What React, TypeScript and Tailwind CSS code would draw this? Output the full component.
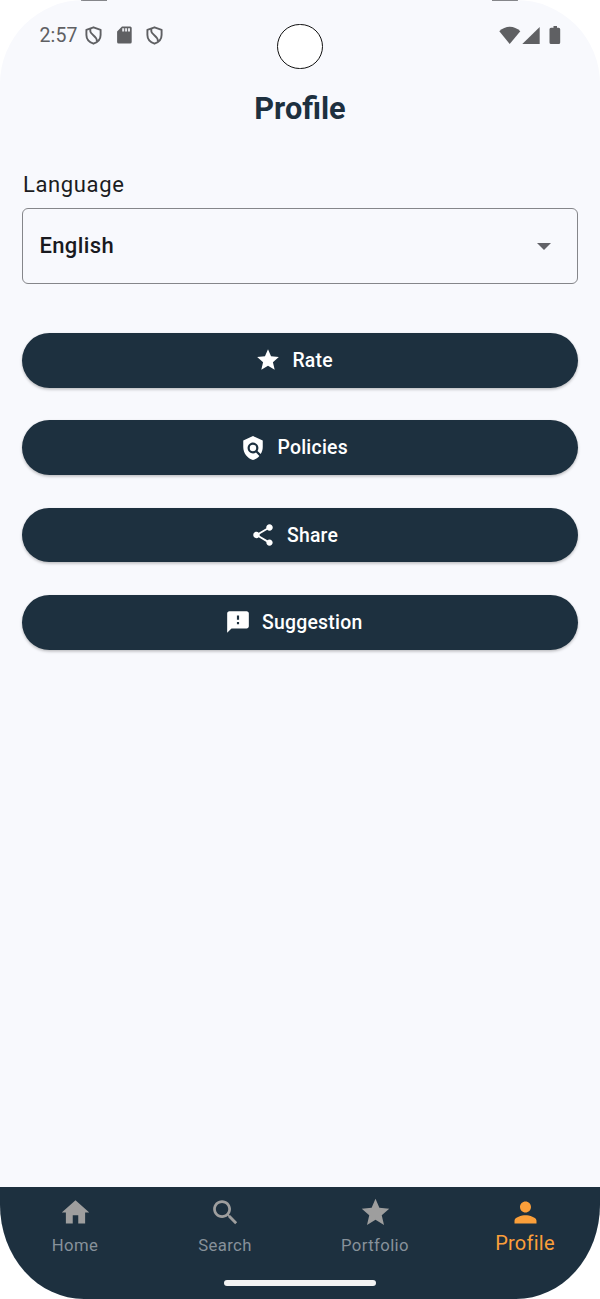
import type { ReactNode } from "react";

const paths = {
  star: "M12 17.27 18.18 21l-1.64-7.03L22 9.24l-7.19-.61L12 2 9.19 8.63 2 9.24l5.46 4.73L5.82 21z",
  policy:
    "M21 5l-9-4-9 4v6c0 5.55 3.84 10.74 9 12 2.3-.56 4.33-1.9 5.88-3.71l-3.12-3.12c-1.94 1.29-4.58 1.07-6.29-.64-1.95-1.95-1.95-5.12 0-7.07 1.95-1.95 5.12-1.95 7.07 0 1.71 1.71 1.92 4.35.64 6.29l2.9 2.9C20.29 15.69 21 13.38 21 11V5z M12 9a3 3 0 1 0 0 6a3 3 0 1 0 0-6z",
  share:
    "M18 16.08c-.76 0-1.44.3-1.96.77L8.91 12.7c.05-.23.09-.46.09-.7s-.04-.47-.09-.7l7.05-4.11c.54.5 1.25.81 2.04.81 1.66 0 3-1.34 3-3s-1.34-3-3-3-3 1.34-3 3c0 .24.04.47.09.7L8.04 9.81C7.5 9.31 6.79 9 6 9c-1.66 0-3 1.34-3 3s1.34 3 3 3c.79 0 1.5-.31 2.04-.81l7.12 4.16c-.05.21-.08.43-.08.65 0 1.61 1.31 2.92 2.92 2.92s2.92-1.31 2.92-2.92-1.31-2.92-2.92-2.92z",
  feedback:
    "M20 2H4c-1.1 0-1.99.9-1.99 2L2 22l4-4h14c1.1 0 2-.9 2-2V4c0-1.1-.9-2-2-2zm-7 12h-2v-2h2v2zm0-4h-2V6h2v4z",
  home: "M10 20v-6h4v6h5v-8h3L12 3 2 12h3v8z",
  search:
    "M15.5 14h-.79l-.28-.27C15.41 12.59 16 11.11 16 9.5 16 5.91 13.09 3 9.5 3S3 5.91 3 9.5 5.91 16 9.5 16c1.61 0 3.09-.59 4.23-1.57l.27.28v.79l5 4.99L20.49 19l-4.99-5zm-6 0C7.01 14 5 11.99 5 9.5S7.01 5 9.5 5 14 7.01 14 9.5 11.99 14 9.5 14z",
  person:
    "M12 12c2.21 0 4-1.79 4-4s-1.79-4-4-4-4 1.79-4 4 1.79 4 4 4zm0 2c-2.67 0-8 1.34-8 4v2h16v-2c0-2.66-5.33-4-8-4z",
};

function Icon({ name, className }: { name: keyof typeof paths; className: string }) {
  return (
    <svg viewBox="0 0 24 24" fill="currentColor" className={className} aria-hidden>
      <path d={paths[name]} />
    </svg>
  );
}

function Shield({ className }: { className: string }) {
  return (
    <svg viewBox="0 0 17 19" fill="none" stroke="currentColor" strokeWidth="1.9" strokeLinejoin="round" className={className} aria-hidden>
      <path d="M8.5 1.3 1.4 3.8V9c0 4.2 2.9 7.2 7.1 8.7 4.2-1.5 7.1-4.5 7.1-8.7V3.8z" />
      <path d="M5.3 2.600v2.600c0 3.800 6.700 4.200 6.700 10.300" />
    </svg>
  );
}

function StatusBar() {
  return (
    <div className="flex h-[70px] items-start text-[#5f6063]">
      <span className="ml-[39.5px] mt-[24px] w-[45.5px] text-[19.5px] leading-[24px] tracking-[0.1px]">2:57</span>
      <Shield className="mt-[26px] h-[19px] w-[17px]" />
      <svg viewBox="0 0 15 18" className="ml-[14.5px] mt-[26px] h-[18px] w-[15px]" aria-hidden>
        <path d="M5 .5h8.2A1.500 1.500 0 0 1 14.700 2v14a1.500 1.500 0 0 1-1.500 1.500H1.600A1.500 1.500 0 0 1 .1 16V5.500z" fill="currentColor" />
        <path d="M5.200 2.200h2v3.200h-2zM8.100 2.200h2v3.200h-2zM11 2.200h2v3.200h-2z" fill="#e8e9ed" />
      </svg>
      <Shield className="ml-[14.5px] mt-[26px] h-[19px] w-[17px]" />
      <span className="ml-[114px] mt-[24px] h-[45px] w-[46px] rounded-full border-[1.5px] border-[#111] bg-white" />
      <svg viewBox="0 0 64 20" className="ml-[176px] mt-[25px] h-[20px] w-[64px]" fill="currentColor" aria-hidden>
        <path d="M.3 6.200C6.300 .2 15.300 .2 21.300 6.200L10.700 19z" />
        <path d="M40.700 2V19H23.300z" />
        <path d="M54.500 1h3.500v1.700h1.700a1.500 1.500 0 0 1 1.500 1.500V17.500A1.500 1.500 0 0 1 59.700 19H52A1.500 1.500 0 0 1 50.500 17.500V4.200a1.500 1.500 0 0 1 1.500-1.500h2.500z" />
      </svg>
    </div>
  );
}

function ActionButton({ icon, children, className }: { icon: keyof typeof paths; children: ReactNode; className: string }) {
  return (
    <button className="flex h-[54.6px] w-full items-center rounded-full bg-[#1d303f] text-white shadow-[0_1.5px_3px_rgba(0,0,0,0.25)]">
      <span className={`flex items-center gap-[11px] ${className}`}>
        <Icon name={icon} className="size-[26px]" />
        <span className="pt-[1px] text-[19.4px] font-medium leading-[28px] tracking-[0.25px]">{children}</span>
      </span>
    </button>
  );
}

function NavItem({ icon, label, active = false }: { icon: keyof typeof paths; label: string; active?: boolean }) {
  return (
    <a className={`flex flex-1 flex-col items-center pt-[9px] ${active ? "text-[#fb9f3a]" : "text-[#9e9e9e]"}`}>
      <Icon name={icon} className="size-[33px]" />
      <span
        className={
          active
            ? "mt-[2px] text-[20px] leading-[24px] tracking-[0.25px]"
            : "mt-[6px] text-[16.7px] leading-[22px] tracking-[0.4px] text-[#87919a]"
        }
      >
        {label}
      </span>
    </a>
  );
}

export default function App() {
  return (
    <div className="h-[1299px] w-[600px] overflow-hidden bg-white font-['Roboto',sans-serif]">
      <div className="relative flex h-full flex-col overflow-hidden rounded-[84px_84px_84px_84px/84px_84px_94px_94px] bg-[#f8f9fd]">
        <span className="absolute left-[81px] top-0 h-px w-[26px] bg-[#85868a]" />
        <span className="absolute right-[82px] top-0 h-px w-[26px] bg-[#85868a]" />
        <StatusBar />
        <h1 className="mt-[19px] text-center text-[30.7px] font-bold leading-[40px] text-[#1d303f]">Profile</h1>

        <main className="flex flex-1 flex-col px-[22.4px] pt-[42px]">
          <label className="pl-[0.5px] text-[22px] leading-[28px] tracking-[0.64px] text-[#1b1c21]">Language</label>
          <button className="mt-[8.6px] flex h-[76px] items-center justify-between rounded-[6px] border-[1.5px] border-[#85868a] pl-[16px] pr-[26px]">
            <span className="text-[22px] font-medium leading-[30px] tracking-[0.4px] text-[#191a1f]">English</span>
            <svg viewBox="0 0 14 7" className="mt-[2px] h-[7px] w-[14px]" fill="#626368" aria-hidden>
              <path d="M0 0h14L7 7z" />
            </svg>
          </button>
          <div className="mt-[49.4px] flex flex-col gap-[32.8px]">
            <ActionButton icon="star" className="pl-[233px]">Rate</ActionButton>
            <ActionButton icon="policy" className="pl-[218px]">Policies</ActionButton>
            <ActionButton icon="share" className="pl-[227.5px]">Share</ActionButton>
            <ActionButton icon="feedback" className="pl-[202.5px]">Suggestion</ActionButton>
          </div>
        </main>

        <footer className="flex h-[112px] flex-col items-center bg-[#1d303f]">
          <nav className="flex h-[92.5px] w-full">
            <NavItem icon="home" label="Home" />
            <NavItem icon="search" label="Search" />
            <NavItem icon="star" label="Portfolio" />
            <NavItem icon="person" label="Profile" active />
          </nav>
          <span className="h-[6px] w-[152px] rounded-full bg-[#f3f3f3]" />
        </footer>
      </div>
    </div>
  );
}
